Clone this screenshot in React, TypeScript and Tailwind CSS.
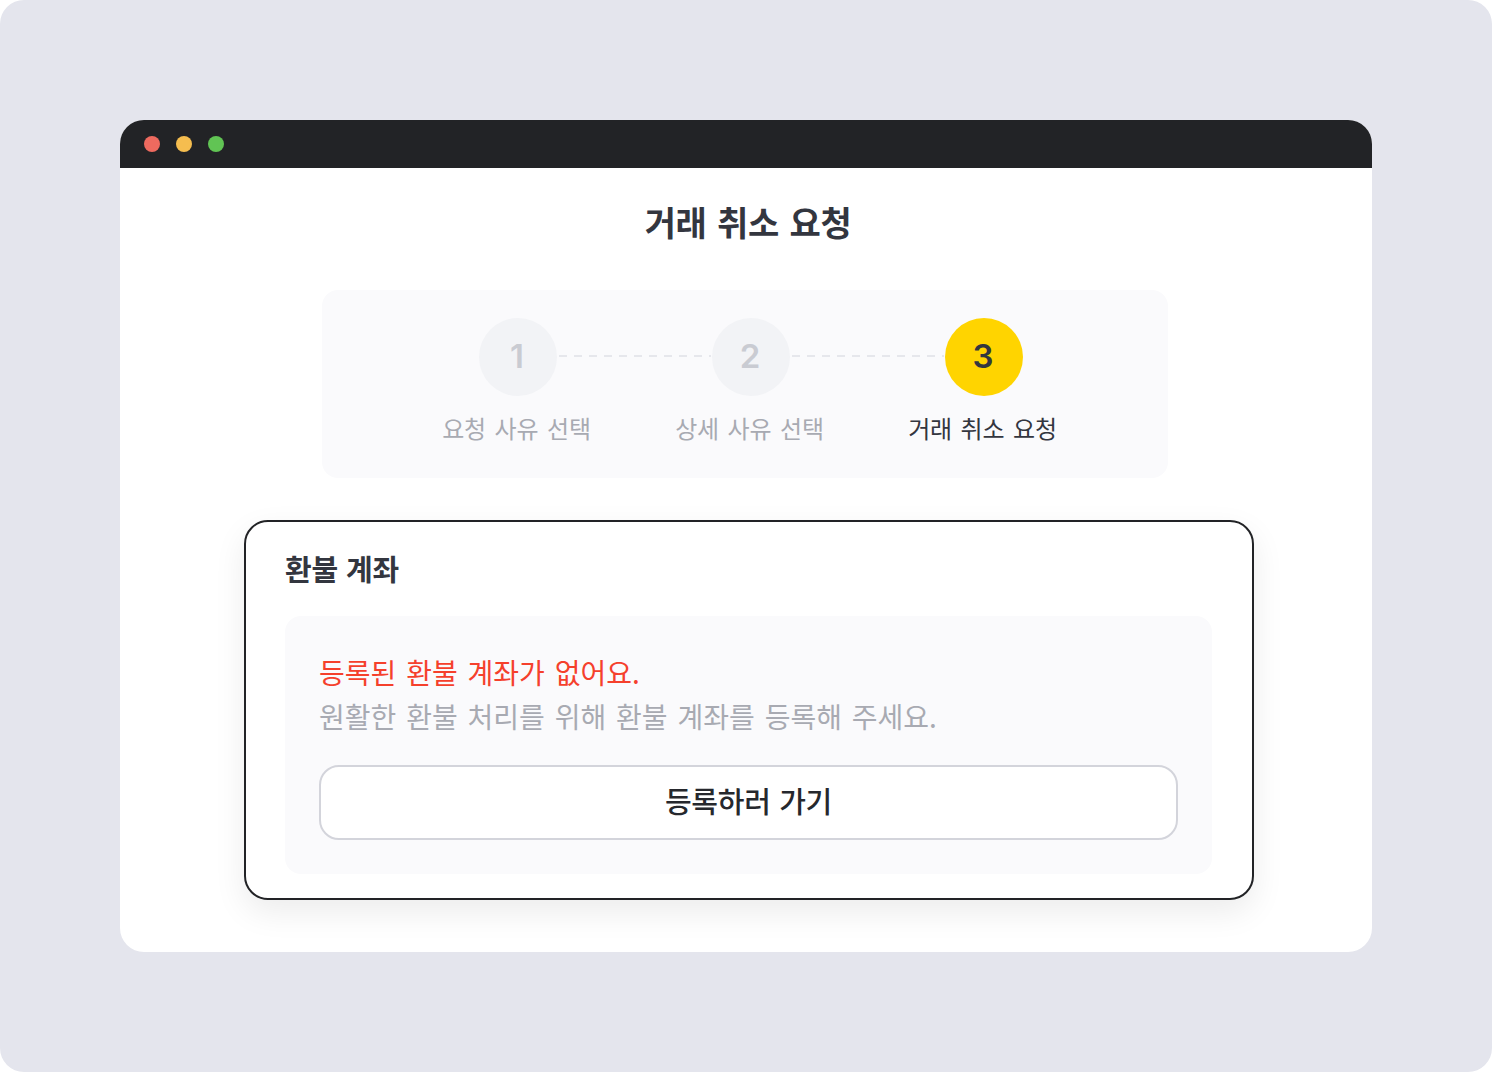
const font = { fontFamily: '"Noto Sans CJK KR", sans-serif' }

function Step({ n, label, active }: { n: number; label: string; active?: boolean }) {
  return (
    <div className="flex w-[233px] flex-col items-center">
      <div
        className={`flex h-[78px] w-[78px] items-center justify-center rounded-full pr-[2px] font-['Inter'] text-[33px] font-semibold ${
          active ? "bg-[#ffd400] text-[#33363f]" : "bg-[#f2f3f6] text-[#c9cbd2]"
        }`}
      >
        {n}
      </div>
      <div
        className={`mt-[14px] mr-[3px] text-[24px] leading-[36px] tracking-[-0.2px] [word-spacing:3.5px] ${
          active ? "text-[#33363f]" : "text-[#a8aab2]"
        }`}
      >
        {label}
      </div>
    </div>
  )
}

function Dashes() {
  return (
    <div className="mx-[-76px] mt-[37px] h-[2px] w-[152px] flex-none bg-[repeating-linear-gradient(90deg,#e6e7ec_0_8px,transparent_8px_15px)]" />
  )
}

export default function App() {
  return (
    <div className="h-[1072px] bg-white" style={font}>
      <div className="h-full rounded-[24px] bg-[#e4e5ed] px-[120px] pt-[120px]">
        <div className="h-[832px] overflow-hidden rounded-[24px] bg-white">
          <div className="flex h-[48px] items-center gap-[16px] bg-[#222326] pl-[24px]">
            <span className="h-[16px] w-[16px] rounded-full bg-[#ee6a5f]" />
            <span className="h-[16px] w-[16px] rounded-full bg-[#f5bd4f]" />
            <span className="h-[16px] w-[16px] rounded-full bg-[#61c454]" />
          </div>
          <div className="flex flex-col items-center">
            <h1 className="mt-[29px] ml-[4px] text-[34px] leading-[50px] font-bold tracking-[-0.3px] text-[#33363f] [word-spacing:3px]">
              거래 취소 요청
            </h1>
            <div className="mt-[43px] mr-[2px] flex h-[188px] w-[846px] justify-center rounded-[16px] bg-[#fafafc] pt-[28px] pl-[12px]">
              <div className="flex items-start">
                <Step n={1} label="요청 사유 선택" />
                <Dashes />
                <Step n={2} label="상세 사유 선택" />
                <Dashes />
                <Step n={3} label="거래 취소 요청" active />
              </div>
            </div>
            <div className="mt-[42px] ml-[6px] h-[380px] w-[1010px] rounded-[24px] border-2 border-[#222326] bg-white px-[39px] pt-[23px] shadow-[0_12px_32px_rgba(0,0,0,0.08)]">
              <h2 className="text-[29px] leading-[46px] font-bold tracking-[-0.3px] text-[#33363f] [word-spacing:2px]">환불 계좌</h2>
              <div className="mt-[25px] h-[258px] w-[927px] rounded-[16px] bg-[#fafafc] px-[34px] pt-[34px]">
                <p className="text-[28px] leading-[44px] text-[#f5402c] [word-spacing:3.6px]">등록된 환불 계좌가 없어요.</p>
                <p className="text-[28px] leading-[44px] text-[#a8aab2] [word-spacing:3.6px]">
                  원활한 환불 처리를 위해 환불 계좌를 등록해 주세요.
                </p>
                <button className="mt-[27px] flex h-[75px] w-[859px] items-center justify-center rounded-[20px] border-2 border-[#d3d4db] bg-white pb-[3px] text-[29px] font-medium tracking-[-0.2px] text-[#26282d] [word-spacing:2px]">
                  등록하러 가기
                </button>
              </div>
            </div>
          </div>
        </div>
      </div>
    </div>
  )
}
